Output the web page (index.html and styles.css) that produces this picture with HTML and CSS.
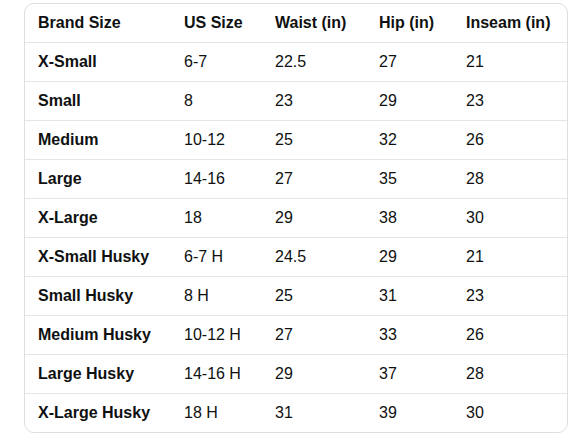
FILE: index.html
```html
<!DOCTYPE html>
<html>
<head>
<meta charset="utf-8">
<link rel="stylesheet" href="styles.css">
</head>
<body>
<div class="card">
  <div class="row head">
    <div class="cell">Brand Size</div><div class="cell">US Size</div><div class="cell">Waist (in)</div><div class="cell">Hip (in)</div><div class="cell">Inseam (in)</div>
  </div>
  <div class="row"><div class="cell b">X-Small</div><div class="cell">6-7</div><div class="cell">22.5</div><div class="cell">27</div><div class="cell">21</div></div>
  <div class="row"><div class="cell b">Small</div><div class="cell">8</div><div class="cell">23</div><div class="cell">29</div><div class="cell">23</div></div>
  <div class="row"><div class="cell b">Medium</div><div class="cell">10-12</div><div class="cell">25</div><div class="cell">32</div><div class="cell">26</div></div>
  <div class="row"><div class="cell b">Large</div><div class="cell">14-16</div><div class="cell">27</div><div class="cell">35</div><div class="cell">28</div></div>
  <div class="row"><div class="cell b">X-Large</div><div class="cell">18</div><div class="cell">29</div><div class="cell">38</div><div class="cell">30</div></div>
  <div class="row"><div class="cell b">X-Small Husky</div><div class="cell">6-7 H</div><div class="cell">24.5</div><div class="cell">29</div><div class="cell">21</div></div>
  <div class="row"><div class="cell b">Small Husky</div><div class="cell">8 H</div><div class="cell">25</div><div class="cell">31</div><div class="cell">23</div></div>
  <div class="row"><div class="cell b">Medium Husky</div><div class="cell">10-12 H</div><div class="cell">27</div><div class="cell">33</div><div class="cell">26</div></div>
  <div class="row"><div class="cell b">Large Husky</div><div class="cell">14-16 H</div><div class="cell">29</div><div class="cell">37</div><div class="cell">28</div></div>
  <div class="row last"><div class="cell b">X-Large Husky</div><div class="cell">18 H</div><div class="cell">31</div><div class="cell">39</div><div class="cell">30</div></div>
</div>
</body>
</html>
```
FILE: styles.css
```css
html, body {
  margin: 0;
  padding: 0;
  background: #ffffff;
}
body {
  padding: 3px 0 0 24px;
  font-family: "Liberation Sans", Arial, sans-serif;
  font-size: 16px;
  color: #0f1111;
}
.card {
  width: 542px;
  border: 1px solid #dcdfdf;
  border-radius: 10px;
  overflow: hidden;
}
.row {
  display: grid;
  grid-template-columns: 146px 91px 104px 87px 114px;
  height: 38px;
  border-bottom: 1px solid #e3e6e6;
}
.row.last {
  border-bottom: none;
}
.cell {
  display: flex;
  align-items: center;
  padding-left: 13px;
  white-space: nowrap;
}
.head .cell, .cell.b {
  font-weight: 700;
}
```
